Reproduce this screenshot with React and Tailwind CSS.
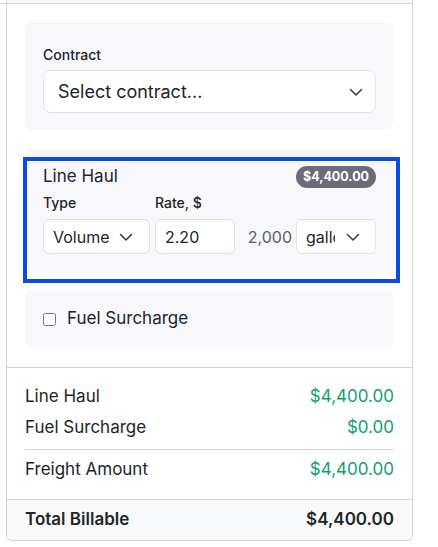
import React from 'react';

const Chevron = () => (
  <svg width="16" height="16" viewBox="0 0 16 16" fill="none" className="shrink-0">
    <path d="m2.5 5.5 5.5 5.5 5.5-5.5" stroke="#343a40" strokeWidth="1.5" strokeLinecap="round" strokeLinejoin="round" />
  </svg>
);

const SummaryRow = ({ label, value }) => (
  <div className="flex h-[31px] items-center justify-between text-[17px]">
    <span>{label}</span>
    <span className="text-[#12a06a]">{value}</span>
  </div>
);

export default function App() {
  return (
    <div className="w-[438px] h-[547px] bg-white font-['Inter',sans-serif] text-[#212529]">
      <div className="w-[413px]">
        {/* top strip of the card, scrolled off */}
        <div className="flex h-[4px] border-b border-[#d3d3d4]">
          <div className="w-[6px]" />
          <div className="flex-1 border-x border-[#d3d3d4] bg-[#f8f9fa]" />
        </div>

        <div className="ml-[6px] border-x border-b border-[#d3d3d4] rounded-b-[6px] overflow-hidden">
          {/* Charges */}
          <div className="px-[18px] pt-[18px] pb-[19px]">
            {/* Contract */}
            <div className="rounded-[8px] bg-[#f7f7fc] px-[18px] pt-[23px] pb-[17px]">
              <div className="mb-[5px] text-[14px] leading-[20px] font-medium">Contract</div>
              <div className="flex h-[43px] items-center justify-between rounded-[8px] border border-[#dee2e6] bg-white pl-[14px] pr-[11px] text-[18px]">
                <span>Select contract...</span>
                <Chevron />
              </div>
            </div>

            {/* Line Haul */}
            <div className="relative mt-[19px] rounded-[8px] bg-[#f7f7fc] px-[18px] pt-[16px] pb-[19px]">
              <div className="flex h-[24px] items-center justify-between">
                <span className="text-[17px]">Line Haul</span>
                <span className="flex h-[22px] w-[80px] items-center justify-center rounded-full bg-[#6c6c78] text-[12.5px] font-bold text-white">
                  $4,400.00
                </span>
              </div>
              <div className="mt-[4px] flex text-[14px] leading-[20px] font-medium">
                <span className="w-[112px]">Type</span>
                <span>Rate, $</span>
              </div>
              <div className="mt-[6px] flex items-center text-[16px]">
                <div className="flex h-[35px] w-[107px] items-center justify-between rounded-[6px] border border-[#dee2e6] bg-white pl-[9px] pr-[15px]">
                  <span>Volume</span>
                  <Chevron />
                </div>
                <div className="ml-[5px] flex h-[35px] w-[80px] items-center rounded-[6px] border border-[#dee2e6] bg-white pl-[9px]">
                  2.20
                </div>
                <span className="flex-1 pr-[4px] text-right text-[#565d70]">2,000</span>
                <div className="flex h-[35px] w-[80px] items-center rounded-[6px] border border-[#dee2e6] bg-white pl-[9px] pr-[14px]">
                  <span className="w-[29px] overflow-hidden whitespace-nowrap">gallons</span>
                  <span className="ml-auto"><Chevron /></span>
                </div>
              </div>
              {/* focus highlight */}
              <div className="pointer-events-none absolute -left-[2px] top-[8px] -right-[6px] -bottom-[10px] border-4 border-[#0b4be0]" />
            </div>

            {/* Fuel Surcharge */}
            <div className="mt-[17px] flex h-[58px] items-center gap-[11px] rounded-[8px] bg-[#f7f7fc] px-[18px]">
              <input type="checkbox" className="h-[13px] w-[13px] m-0" />
              <span className="text-[17px]">Fuel Surcharge</span>
            </div>
          </div>

          {/* Summary */}
          <div className="border-t border-[#d3d3d4] px-[18px] pt-[13px] pb-[14px]">
            <SummaryRow label="Line Haul" value="$4,400.00" />
            <SummaryRow label="Fuel Surcharge" value="$0.00" />
            <div className="mt-[6px] border-t border-[#d3d3d4]" />
            <div className="mt-[4px]">
              <SummaryRow label="Freight Amount" value="$4,400.00" />
            </div>
          </div>

          <div className="flex h-[41px] items-center justify-between border-t border-[#d3d3d4] bg-[#f8f9fa] px-[18px] text-[17px] font-semibold">
            <span>Total Billable</span>
            <span>$4,400.00</span>
          </div>
        </div>
      </div>
    </div>
  );
}
